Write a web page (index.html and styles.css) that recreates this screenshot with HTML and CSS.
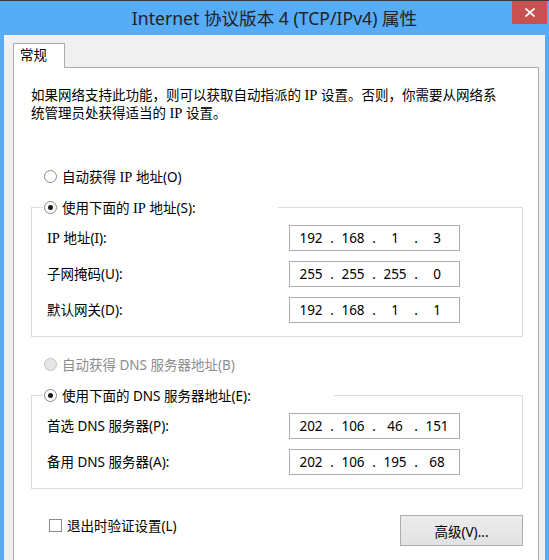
FILE: index.html
```html
<!DOCTYPE html>
<html lang="zh-CN">
<head>
<meta charset="utf-8">
<title>Internet 协议版本 4 (TCP/IPv4) 属性</title>
<link rel="stylesheet" href="styles.css">
</head>
<body>
<div class="window">
  <div class="titlebar">
    <span class="title">Internet 协议版本 4 (TCP/IPv4) 属性</span>
    <button class="close" aria-label="关闭">
      <svg width="10" height="9" viewBox="0 0 10 9"><path d="M0.5 0.5 L9.5 8.5 M9.5 0.5 L0.5 8.5" stroke="#fff" stroke-width="1.8" fill="none"/></svg>
    </button>
  </div>
  <div class="client">
    <div class="tabs"><div class="tab active">常规</div></div>
    <div class="panel">
      <p class="desc">如果网络支持此功能，则可以获取自动指派的 <span class="ip">IP</span> 设置。否则，你需要从网络系<br>统管理员处获得适当的 <span class="ip">IP</span> 设置。</p>

      <div class="radio-row"><span class="radio"></span><span>自动获得 <span class="ip">IP</span> 地址(O)</span></div>

      <div class="group">
        <div class="group-head head-ip"><span class="radio checked"></span><span>使用下面的 <span class="ip">IP</span> 地址(S):</span></div>
        <div class="rows">
          <div class="label"><span class="ip">IP</span> 地址(I):</div>
          <div class="ipbox"><span>192</span><span>.</span><span>168</span><span>.</span><span>1</span><span>.</span><span>3</span></div>
          <div class="label">子网掩码(U):</div>
          <div class="ipbox"><span>255</span><span>.</span><span>255</span><span>.</span><span>255</span><span>.</span><span>0</span></div>
          <div class="label">默认网关(D):</div>
          <div class="ipbox"><span>192</span><span>.</span><span>168</span><span>.</span><span>1</span><span>.</span><span>1</span></div>
        </div>
      </div>

      <div class="radio-row disabled"><span class="radio off"></span><span>自动获得 DNS 服务器地址(B)</span></div>

      <div class="group">
        <div class="group-head head-dns"><span class="radio checked"></span><span>使用下面的 DNS 服务器地址(E):</span></div>
        <div class="rows">
          <div class="label">首选 DNS 服务器(P):</div>
          <div class="ipbox"><span>202</span><span>.</span><span>106</span><span>.</span><span>46</span><span>.</span><span>151</span></div>
          <div class="label">备用 DNS 服务器(A):</div>
          <div class="ipbox"><span>202</span><span>.</span><span>106</span><span>.</span><span>195</span><span>.</span><span>68</span></div>
        </div>
      </div>

      <div class="footer">
        <div class="check-row"><span class="checkbox"></span><span>退出时验证设置(L)</span></div>
        <button class="btn">高级(V)...</button>
      </div>
    </div>
  </div>
</div>
</body>
</html>
```
FILE: styles.css
```css
html, body {
  margin: 0;
  padding: 0;
}
body {
  width: 549px;
  height: 560px;
  overflow: hidden;
  font-family: "Noto Sans", "Noto Sans CJK SC", sans-serif;
  font-size: 13.5px;
  color: #000;
}
.window {
  background: #56acf7;
  border-top: 1px solid #3a3a3a;
  padding: 0 4px;
  height: 559px;
  display: flex;
  flex-direction: column;
}
.titlebar {
  height: 34px;
  display: grid;
  grid-template-columns: 1fr auto 1fr;
  align-items: center;
  flex: none;
}
.title {
  grid-column: 2;
  font-family: "Noto Sans", "Noto Sans CJK SC", sans-serif;
  font-size: 17.6px;
  color: #222;
  white-space: nowrap;
  line-height: 34px;
}
.close {
  grid-column: 3;
  justify-self: end;
  align-self: start;
  width: 35px;
  height: 23px;
  margin-right: -2px;
  border: 0;
  padding: 0;
  background: #c75050;
  display: grid;
  place-items: center;
}
.close svg { display: block; }
.client {
  flex: 1;
  background: #f0f0f0;
  padding: 8px 6px 0 9px;
  display: flex;
  flex-direction: column;
  overflow: hidden;
}
.tabs {
  display: flex;
  flex: none;
}
.tab {
  width: 52px;
  height: 25px;
  box-sizing: border-box;
  border: 1px solid #adadad;
  border-bottom: 0;
  background: #fff;
  padding-left: 6px;
  line-height: 23px;
  margin-bottom: -1px;
  position: relative;
  z-index: 1;
}
.panel {
  flex: none;
  height: 540px;
  background: #fff;
  border: 1px solid #adadad;
  padding: 18px 15px 0 17px;
}
.desc {
  margin: 0;
  line-height: 18px;
}
.ip {
  font-family: "Liberation Serif", serif;
  font-size: 14.5px;
  line-height: 0;
}
.radio-row {
  margin-top: 45px;
  margin-left: 13px;
  height: 18px;
  display: flex;
  align-items: center;
  gap: 5px;
  white-space: nowrap;
}
.radio-row.disabled {
  margin-top: 18px;
  color: #8d8d8d;
}
.radio {
  width: 13px;
  height: 13px;
  box-sizing: border-box;
  border: 1px solid #8a8a8a;
  border-radius: 50%;
  background: #fff;
  flex: none;
  display: grid;
  place-items: center;
}
.radio.checked::after {
  content: "";
  width: 5px;
  height: 5px;
  border-radius: 50%;
  background: #1c1c1c;
}
.radio.off {
  border-color: #c2c2c2;
  background: #e6e6e6;
}
.group {
  margin-top: 22px;
  border: 1px solid #dcdcdc;
  padding: 0 61px 13px 15px;
}
.group-head {
  margin-top: -10px;
  margin-left: -4px;
  padding-left: 1px;
  height: 18px;
  background: #fff;
  display: flex;
  align-items: center;
  gap: 5px;
  white-space: nowrap;
}
.head-ip { width: 234px; }
.head-dns { width: 290px; }
.rows {
  margin-top: 9px;
  display: grid;
  grid-template-columns: 242px 171px;
  row-gap: 10px;
  align-items: center;
}
.label {
  white-space: nowrap;
  line-height: 18px;
}
.ipbox {
  width: 171px;
  height: 26px;
  box-sizing: border-box;
  border: 1px solid #abadb3;
  padding-left: 4px;
  display: grid;
  grid-template-columns: 34px 8px 34px 8px 34px 8px 34px;
  align-items: center;
  text-align: center;
  line-height: 24px;
}
.footer {
  margin-top: 26px;
  display: flex;
  justify-content: space-between;
  align-items: flex-start;
  padding-left: 18px;
}
.check-row {
  margin-top: 1px;
  height: 18px;
  display: flex;
  align-items: center;
  gap: 5px;
}
.checkbox {
  width: 13px;
  height: 13px;
  box-sizing: border-box;
  border: 1px solid #8a8a8a;
  background: #fff;
  flex: none;
}
.btn {
  width: 123px;
  height: 31px;
  box-sizing: border-box;
  border: 1px solid #adadad;
  background: linear-gradient(#ececec, #e2e2e2);
  font-family: "Noto Sans", "Noto Sans CJK SC", sans-serif;
  font-size: 13.5px;
  color: #000;
  padding: 0;
}
```
